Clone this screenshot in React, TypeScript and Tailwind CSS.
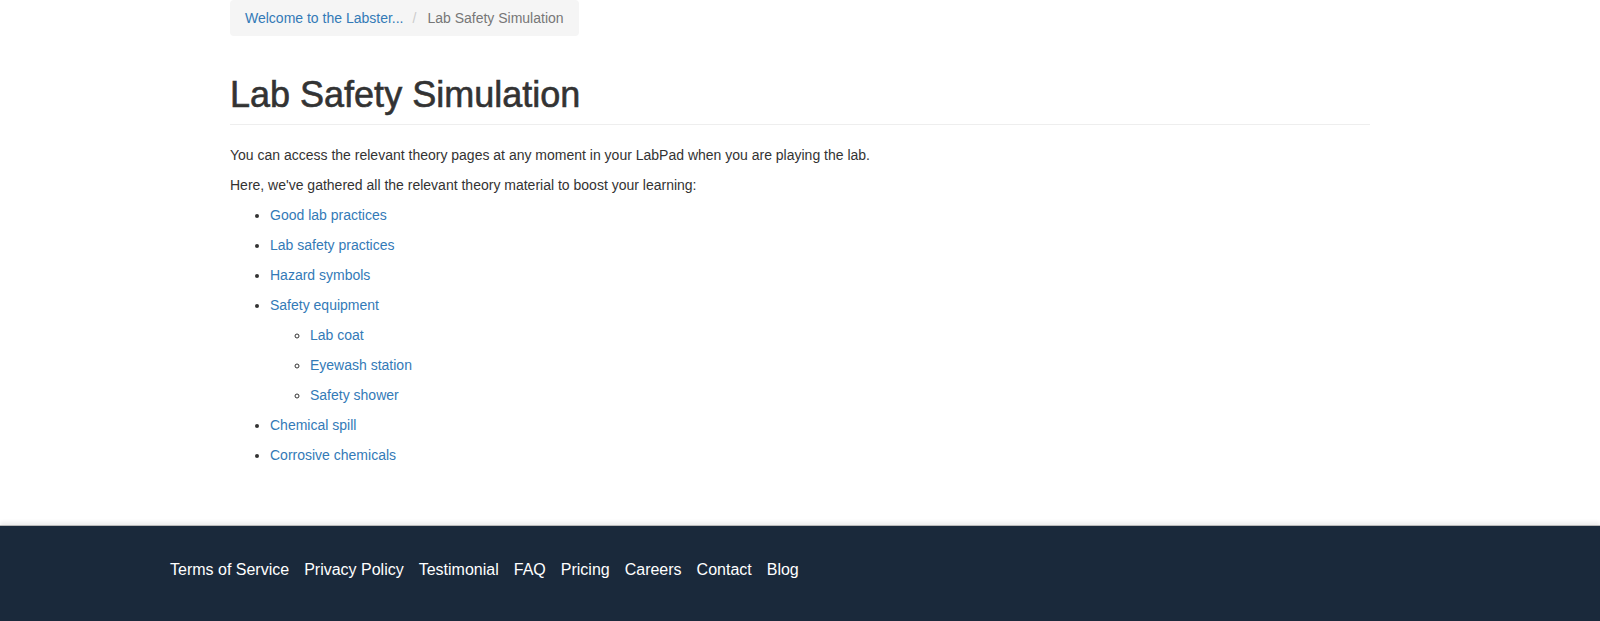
const topics = [
  { label: "Good lab practices" },
  { label: "Lab safety practices" },
  { label: "Hazard symbols" },
  {
    label: "Safety equipment",
    children: ["Lab coat", "Eyewash station", "Safety shower"],
  },
  { label: "Chemical spill" },
  { label: "Corrosive chemicals" },
];

const footerLinks = [
  "Terms of Service",
  "Privacy Policy",
  "Testimonial",
  "FAQ",
  "Pricing",
  "Careers",
  "Contact",
  "Blog",
];

const App = () => {
  return (
    <div className="min-h-screen bg-white text-[14px] leading-5 text-[#333] font-['Liberation_Sans',Arial,sans-serif]">
      <main className="w-[1170px] mx-auto px-[15px] pb-[60px]">
        <ol className="inline-flex items-center bg-[#f5f5f5] rounded-[4px] px-[15px] py-2">
          <li>
            <a href="#" className="text-[#337ab7]">
              Welcome to the Labster...
            </a>
          </li>
          <li className="text-[#777]">
            <span className="text-[#ccc] px-[5px] ml-1">/</span>
            <span className="ml-[6px]">Lab Safety Simulation</span>
          </li>
        </ol>

        <div className="mt-[39px] pb-[9px] border-b border-[#eee]">
          <h1 className="text-[36px] leading-[40px] font-normal text-[#333] [-webkit-text-stroke:0.6px_#333]">
            Lab Safety Simulation
          </h1>
        </div>

        <p className="mt-5 mb-[10px]">
          You can access the relevant theory pages at any moment in your LabPad when you are playing the lab.
        </p>
        <p className="mb-[10px]">
          Here, we've gathered all the relevant theory material to boost your learning:
        </p>

        <ul className="list-disc pl-10 space-y-[10px]">
          {topics.map((t) => (
            <li key={t.label}>
              <a href="#" className="text-[#337ab7]">
                {t.label}
              </a>
              {t.children && (
                <ul className="list-[circle] pl-10 mt-[10px] space-y-[10px]">
                  {t.children.map((c) => (
                    <li key={c}>
                      <a href="#" className="text-[#337ab7]">
                        {c}
                      </a>
                    </li>
                  ))}
                </ul>
              )}
            </li>
          ))}
        </ul>
      </main>

      <footer className="bg-[#1a293b] border-t border-[#b9b9b9] shadow-[0_-3px_4px_rgba(0,0,0,0.07)] pt-[33px] pb-[42px] px-[170px]">
        <nav className="flex gap-[15px] text-[16px] leading-[22px] text-white">
          {footerLinks.map((l) => (
            <a key={l} href="#">
              {l}
            </a>
          ))}
        </nav>
      </footer>
    </div>
  );
};

export default App;
